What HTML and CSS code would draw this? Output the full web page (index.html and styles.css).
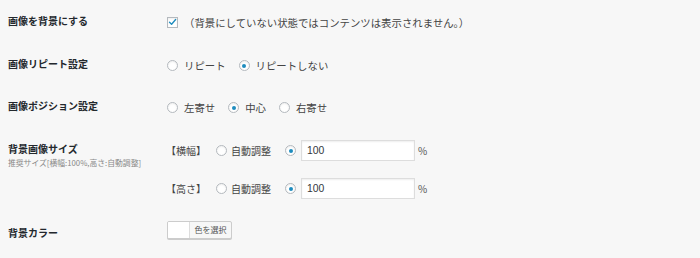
FILE: index.html
```html
<!DOCTYPE html>
<html lang="ja">
<head>
  <meta charset="UTF-8">
  <meta name="viewport" content="width=device-width, initial-scale=1.0">
  <title>背景設定</title>
  <link rel="stylesheet" href="styles.css">
</head>
<body>
  <div class="form-table">
    <div class="row row-check">
      <div class="label">画像を背景にする</div>
      <div class="field">
        <label class="opt">
          <span class="checkbox checked">
            <svg viewBox="0 0 12 12" width="10" height="10"><path d="M2 6.2 L4.8 9 L10.2 2.6" fill="none" stroke="#1e8cbe" stroke-width="1.8" stroke-linecap="round" stroke-linejoin="round"/></svg>
          </span>
          <span class="text">（背景にしていない状態ではコンテンツは表示されません。）</span>
        </label>
      </div>
    </div>

    <div class="row row-repeat">
      <div class="label">画像リピート設定</div>
      <div class="field">
        <label class="opt"><span class="radio"></span><span class="text">リピート</span></label>
        <label class="opt"><span class="radio checked"></span><span class="text">リピートしない</span></label>
      </div>
    </div>

    <div class="row row-position">
      <div class="label">画像ポジション設定</div>
      <div class="field">
        <label class="opt"><span class="radio"></span><span class="text">左寄せ</span></label>
        <label class="opt"><span class="radio checked"></span><span class="text">中心</span></label>
        <label class="opt"><span class="radio"></span><span class="text">右寄せ</span></label>
      </div>
    </div>

    <div class="row row-size">
      <div class="label">
        背景画像サイズ
        <p class="note">推奨サイズ[横幅:100%,高さ:自動調整]</p>
      </div>
      <div class="field">
        <div class="size-line">
          <span class="dim">【横幅】</span>
          <label class="opt"><span class="radio"></span><span class="text">自動調整</span></label>
          <span class="radio checked"></span>
          <input type="text" class="num" value="100">
          <span class="unit">%</span>
        </div>
        <div class="size-line">
          <span class="dim">【高さ】</span>
          <label class="opt"><span class="radio"></span><span class="text">自動調整</span></label>
          <span class="radio checked"></span>
          <input type="text" class="num" value="100">
          <span class="unit">%</span>
        </div>
      </div>
    </div>

    <div class="row row-color">
      <div class="label">背景カラー</div>
      <div class="field">
        <button type="button" class="color-btn">
          <span class="swatch"></span>
          <span class="color-text">色を選択</span>
        </button>
      </div>
    </div>
  </div>
</body>
</html>
```

FILE: styles.css
```css
/* Basic Reset */
* {
  margin: 0;
  padding: 0;
  box-sizing: border-box;
}
body {
  font-family: "Noto Sans CJK JP", "Noto Sans", sans-serif;
  font-size: 10px;
  background: #f7f7f7;
  color: #444;
  padding: 0 8px;
  width: 700px;
  height: 258px;
  overflow: hidden;
}
.form-table {
  display: flex;
  flex-direction: column;
}
.row {
  display: grid;
  grid-template-columns: 159px 1fr;
  align-items: center;
}
.label {
  font-weight: bold;
  color: #23282d;
  line-height: 13px;
}
.field {
  display: flex;
  align-items: center;
  font-size: 10.4px;
  line-height: 13px;
}
.row-check { height: 43px; padding-top: 1px; }
.row-check .label { margin-top: -3px; }
.row-repeat { height: 43px; }
.row-repeat .label { margin-top: -3px; }
.row-repeat .field { margin-top: 2px; }
.row-position { height: 42px; }
.row-position .label { margin-top: -3px; }
.row-position .field { margin-top: 1px; }

.row-size {
  align-items: start;
  padding: 11px 0 10px;
}
.row-size .label { padding-top: 3px; }
.row-size .field {
  flex-direction: column;
  align-items: flex-start;
  gap: 15px;
  font-size: 10px;
}
.note {
  font-weight: normal;
  font-size: 7.8px;
  line-height: 11px;
  color: #888;
  margin-top: 2px;
}
.row-color { height: 40px; }
.row-color .label { margin-top: 4px; }

.opt {
  display: flex;
  align-items: center;
  margin-right: 13px;
}
.opt .text { margin-left: 6px; }

.checkbox,
.radio {
  display: inline-flex;
  align-items: center;
  justify-content: center;
  width: 11px;
  height: 11px;
  background: #fff;
  border: 1px solid #b4b9be;
  box-shadow: inset 0 1px 2px rgba(0, 0, 0, 0.07);
  flex: none;
}
.checkbox svg { margin-top: -1px; }
.radio { border-radius: 50%; }
.radio.checked::before {
  content: "";
  width: 4px;
  height: 4px;
  border-radius: 50%;
  background: #1e8cbe;
}

.size-line {
  display: flex;
  align-items: center;
  height: 23px;
}
.dim {
  width: 50px;
  margin-left: -1px;
}
.size-line .opt { margin-right: 14px; }
.size-line .opt .text { margin-left: 4px; }
.num {
  width: 114px;
  height: 21px;
  margin-left: 5px;
  border: 1px solid #ddd;
  background: #fff;
  box-shadow: inset 0 1px 2px rgba(0, 0, 0, 0.07);
  font-family: "Liberation Sans", sans-serif;
  font-size: 10.4px;
  color: #32373c;
  padding: 0 5px;
  outline: none;
}
.unit {
  margin-left: 3px;
  color: #555;
}

.color-btn {
  display: flex;
  align-items: stretch;
  width: 65px;
  height: 18px;
  border: 1px solid #ccc;
  border-radius: 2px;
  background: #f7f7f7;
  box-shadow: 0 1px 0 #ccc;
  font-family: inherit;
  overflow: hidden;
  cursor: pointer;
}
.swatch {
  width: 22px;
  background: #fff;
  border-right: 1px solid #ddd;
}
.color-text {
  flex: 1;
  font-size: 8px;
  line-height: 16px;
  color: #555;
  text-align: center;
}
```
